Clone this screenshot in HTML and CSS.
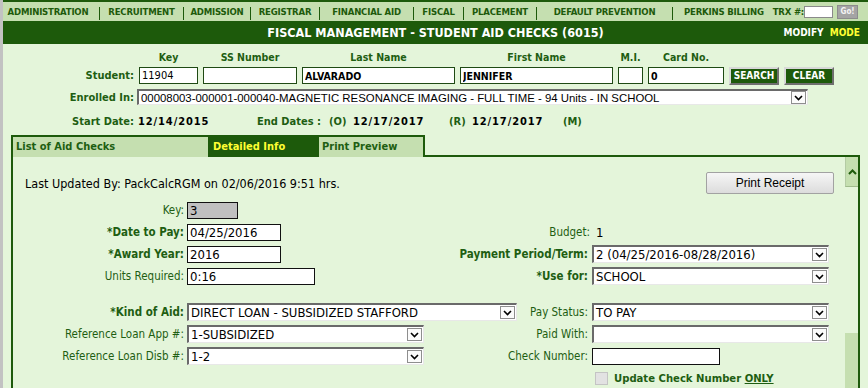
FILE: index.html
```html
<!DOCTYPE html>
<html lang="en">
<head>
    <meta charset="UTF-8">
    <meta name="viewport" content="width=device-width, initial-scale=1.0">
    <title>Fiscal Management - Student Aid Checks</title>
    <link rel="stylesheet" href="styles.css">
</head>
<body>
    <div class="menu">
        <a class="first">ADMINISTRATION</a><i></i>
        <a>RECRUITMENT</a><i></i>
        <a>ADMISSION</a><i></i>
        <a>REGISTRAR</a><i></i>
        <a>FINANCIAL AID</a><i></i>
        <a>FISCAL</a><i></i>
        <a>PLACEMENT</a><i></i>
        <a>DEFAULT PREVENTION</a><i></i>
        <div class="menu-end">
            <a>PERKINS BILLING</a>
            <span>TRX #:</span>
            <input type="text" class="trx">
            <button class="go">Go!</button>
        </div>
    </div>

    <div class="title">
        <span></span>
        <h1>FISCAL MANAGEMENT - STUDENT AID CHECKS (6015)</h1>
        <span class="mode">MODIFY <b>MODE</b></span>
    </div>

    <div class="search">
        <div class="srow heads">
            <span class="slab"></span>
            <span class="w-key">Key</span>
            <span class="w-ss">SS Number</span>
            <span class="w-last">Last Name</span>
            <span class="w-first">First Name</span>
            <span class="w-mi">M.I.</span>
            <span class="w-card">Card No.</span>
        </div>
        <div class="srow student">
            <label class="slab">Student:</label>
            <input type="text" class="sin w-key" value="11904">
            <input type="text" class="sin w-ss" value="">
            <input type="text" class="sin w-last strong" value="ALVARADO">
            <input type="text" class="sin w-first strong" value="JENNIFER">
            <input type="text" class="sin w-mi" value="">
            <input type="text" class="sin w-card strong" value="0">
            <button class="gbtn">SEARCH</button>
            <button class="gbtn">CLEAR</button>
        </div>
        <div class="srow enrolled">
            <label class="slab">Enrolled In:</label>
            <div class="sel enroll-sel">
                <span>00008003-000001-000040-MAGNETIC RESONANCE IMAGING - FULL TIME - 94 Units - IN SCHOOL</span>
                <b class="arr"><svg width="9" height="6" viewBox="0 0 9 6"><polyline points="1,1 4.5,4.5 8,1" fill="none" stroke="#000" stroke-width="1.6"/></svg></b>
            </div>
        </div>
        <div class="srow dates">
            <label class="slab">Start Date:</label>
            <span class="val d1">12/14/2015</span>
            <span class="d-end">End Dates :</span>
            <span class="d-o">(O)</span>
            <span class="val d2">12/17/2017</span>
            <span class="d-r">(R)</span>
            <span class="val d3">12/17/2017</span>
            <span>(M)</span>
        </div>
    </div>

    <div class="tabs">
        <div class="tab t1">List of Aid Checks</div>
        <div class="tab t2 active">Detailed Info</div>
        <div class="tab t3 last">Print Preview</div>
        <div class="tab-fill"></div>
    </div>

    <div class="panel">
        <div class="pbody">
            <div class="updated">
                <span>Last Updated By: PackCalcRGM on 02/06/2016 9:51 hrs.</span>
                <button class="receipt">Print Receipt</button>
            </div>

            <div class="row">
                <label class="lab">Key:</label>
                <input type="text" class="fin key-in" value="3" readonly>
            </div>
            <div class="row">
                <label class="lab req">*Date to Pay:</label>
                <input type="text" class="fin w94" value="04/25/2016">
                <div class="right">
                    <label class="lab2">Budget:</label>
                    <span class="budget">1</span>
                </div>
            </div>
            <div class="row">
                <label class="lab req">*Award Year:</label>
                <input type="text" class="fin w94" value="2016">
                <div class="right">
                    <label class="lab2 req">Payment Period/Term:</label>
                    <div class="sel w237">
                        <span>2 (04/25/2016-08/28/2016)</span>
                        <b class="arr"><svg width="9" height="6" viewBox="0 0 9 6"><polyline points="1,1 4.5,4.5 8,1" fill="none" stroke="#000" stroke-width="1.6"/></svg></b>
                    </div>
                </div>
            </div>
            <div class="row">
                <label class="lab">Units Required:</label>
                <input type="text" class="fin w128" value="0:16">
                <div class="right">
                    <label class="lab2 req">*Use for:</label>
                    <div class="sel w237">
                        <span>SCHOOL</span>
                        <b class="arr"><svg width="9" height="6" viewBox="0 0 9 6"><polyline points="1,1 4.5,4.5 8,1" fill="none" stroke="#000" stroke-width="1.6"/></svg></b>
                    </div>
                </div>
            </div>

            <div class="row group">
                <label class="lab req">*Kind of Aid:</label>
                <div class="sel w330">
                    <span>DIRECT LOAN - SUBSIDIZED STAFFORD</span>
                    <b class="arr"><svg width="9" height="6" viewBox="0 0 9 6"><polyline points="1,1 4.5,4.5 8,1" fill="none" stroke="#000" stroke-width="1.6"/></svg></b>
                </div>
                <div class="right">
                    <label class="lab2">Pay Status:</label>
                    <div class="sel w237">
                        <span>TO PAY</span>
                        <b class="arr"><svg width="9" height="6" viewBox="0 0 9 6"><polyline points="1,1 4.5,4.5 8,1" fill="none" stroke="#000" stroke-width="1.6"/></svg></b>
                    </div>
                </div>
            </div>
            <div class="row">
                <label class="lab">Reference Loan App #:</label>
                <div class="sel w237">
                    <span>1-SUBSIDIZED</span>
                    <b class="arr"><svg width="9" height="6" viewBox="0 0 9 6"><polyline points="1,1 4.5,4.5 8,1" fill="none" stroke="#000" stroke-width="1.6"/></svg></b>
                </div>
                <div class="right">
                    <label class="lab2">Paid With:</label>
                    <div class="sel w237">
                        <span></span>
                        <b class="arr"><svg width="9" height="6" viewBox="0 0 9 6"><polyline points="1,1 4.5,4.5 8,1" fill="none" stroke="#000" stroke-width="1.6"/></svg></b>
                    </div>
                </div>
            </div>
            <div class="row">
                <label class="lab">Reference Loan Disb #:</label>
                <div class="sel w237">
                    <span>1-2</span>
                    <b class="arr"><svg width="9" height="6" viewBox="0 0 9 6"><polyline points="1,1 4.5,4.5 8,1" fill="none" stroke="#000" stroke-width="1.6"/></svg></b>
                </div>
                <div class="right">
                    <label class="lab2">Check Number:</label>
                    <input type="text" class="fin w128 check-in" value="">
                </div>
            </div>
            <div class="row">
                <div class="right">
                    <label class="only"><span class="box"></span><span>Update Check Number <u>ONLY</u></span></label>
                </div>
            </div>
        </div>
        <div class="scroll">
            <div class="sc-up"><svg width="9" height="6" viewBox="0 0 9 6"><polyline points="1,5 4.5,1.5 8,5" fill="none" stroke="#1d5a0b" stroke-width="2"/></svg></div>
            <div class="sc-track"></div>
            <div class="sc-thumb"></div>
        </div>
    </div>
</body>
</html>
```

FILE: styles.css
```css
body {
    margin: 0;
    height: 388px;
    overflow: hidden;
    background-color: #e4f5da;
    border-left: 3px solid #c2c2c2;
    font-family: "DejaVu Sans Condensed", "DejaVu Sans", sans-serif;
    font-size: 11px;
    color: #1e5e12;
}
input, button {
    font-family: inherit;
    box-sizing: border-box;
    margin: 0;
}

/* top menu */
.menu {
    display: grid;
    grid-template-columns: 96px 1px 83px 1px 66px 1px 68px 1px 93px 1px 49px 1px 72px 1px 135px 1px 1fr;
    align-items: center;
    height: 19px;
    border-top: 2px solid #1d5a0b;
    background-color: #c5dfb0;
    font-size: 9.5px;
    letter-spacing: -0.2px;
    font-weight: bold;
    color: #1d5a0b;
}
.menu a {
    text-align: center;
    white-space: nowrap;
}
.menu a.first {
    padding-right: 6px;
}
.menu i {
    align-self: end;
    height: 13px;
    margin-bottom: 1px;
    background-color: #1d5a0b;
}
.menu-end {
    display: flex;
    align-items: center;
    padding-left: 11px;
    white-space: nowrap;
}
.menu-end span {
    margin-left: 9px;
}
.trx {
    width: 29px;
    height: 12px;
    padding: 0;
    border: 1px solid #8a8a8a;
    background: #fff;
}
.go {
    width: 21px;
    height: 14px;
    margin-left: 4px;
    padding: 0;
    border: 1px solid #8c8c8c;
    background: #a4a4a4;
    color: #f4f4f4;
    font-size: 8px;
    font-weight: bold;
    letter-spacing: 0;
}

/* title bar */
.title {
    display: grid;
    grid-template-columns: 1fr auto 1fr;
    align-items: center;
    height: 23px;
    background-color: #1d5a0b;
    color: #fff;
    font-weight: bold;
}
.title h1 {
    margin: 0;
    font-size: 12.5px;
}
.mode {
    justify-self: end;
    padding-right: 8px;
    font-size: 10px;
}
.mode b {
    margin-left: 3px;
    color: #ffff33;
}

/* student search */
.srow {
    display: flex;
    align-items: center;
    gap: 5px;
}
.srow > * {
    flex: none;
}
.slab {
    width: 131px;
    text-align: right;
    font-weight: bold;
}
.heads {
    height: 18px;
    margin-top: 4px;
    font-weight: bold;
    font-size: 10.5px;
}
.heads span {
    text-align: center;
}
.w-key { width: 59px; }
.w-ss { width: 94px; }
.w-last { width: 153px; }
.w-first { width: 153px; }
.w-mi { width: 25px; }
.w-card { width: 76px; }
.student {
    height: 17px;
    margin-top: 1px;
}
.sin {
    height: 17px;
    padding: 0 2px;
    border: 1px solid #1f4a14;
    background: #fff;
    font-size: 11px;
    color: #000;
}
.sin.strong {
    font-weight: bold;
    font-size: 10.5px;
}
.gbtn {
    width: 50px;
    height: 18px;
    padding: 0;
    border: 2px solid;
    border-color: #d8d8d8 #6f6f6f #6f6f6f #d8d8d8;
    background-color: #1d5a0b;
    color: #fff;
    font-size: 10px;
    font-weight: bold;
}
.enrolled {
    gap: 3px;
    margin-top: 5px;
}
.dates {
    height: 18px;
    margin-top: 7px;
    gap: 0;
    font-weight: bold;
}
.dates .slab {
    margin-right: 4px;
}
.val {
    color: #000;
    letter-spacing: 0.9px;
}
.d1 { width: 119px; }
.d-end { width: 72px; }
.d-o { width: 24px; }
.d2 { width: 96px; }
.d-r { width: 23px; }
.d3 { width: 91px; }

/* select look-alike */
.sel {
    display: flex;
    align-items: center;
    height: 18px;
    box-sizing: border-box;
    border-top: 2px solid #6a6a6a;
    border-left: 2px solid #6a6a6a;
    border-right: 1px solid #e8e8e8;
    border-bottom: 1px solid #e8e8e8;
    background: #fff;
    color: #000;
    font-size: 13px;
}
.sel span {
    flex: 1;
    padding-left: 2px;
    white-space: nowrap;
    overflow: hidden;
}
.sel.enroll-sel {
    width: 671px;
    height: 16px;
    font-family: "Liberation Sans", Arial, sans-serif;
    font-size: 11.4px;
}
.arr {
    display: flex;
    align-items: center;
    justify-content: center;
    width: 15px;
    height: 13px;
    margin-right: 1px;
    box-sizing: border-box;
    border: 1px solid #8e8e8e;
    background: #fbfbfb;
}
.w237 { width: 237px; }
.w330 { width: 330px; }

/* tabs */
.tabs {
    display: flex;
    height: 22px;
    margin-top: 5px;
    padding-left: 8px;
}
.tab {
    box-sizing: border-box;
    padding-left: 3px;
    border: 2px solid #1d5a0b;
    border-right: none;
    border-bottom: none;
    background-color: #c5dfb0;
    font-weight: bold;
    line-height: 20px;
}
.tab.active {
    background-color: #1d5a0b;
    color: #ffff33;
}
.tab.last {
    border-right: 2px solid #1d5a0b;
}
.t1 { width: 197px; }
.t2 { width: 109px; }
.t3 { width: 108px; }
.tab-fill {
    flex: 1;
    margin-right: 8px;
    border-bottom: 2px solid #1d5a0b;
}

/* detail panel */
.panel {
    display: flex;
    height: 250px;
    margin: 0 8px;
    border: 2px solid #1d5a0b;
    border-top: none;
}
.pbody {
    flex: 1;
    padding-top: 15px;
}
.updated {
    display: flex;
    align-items: center;
    justify-content: space-between;
    height: 22px;
    margin-bottom: 5px;
    padding: 0 11px 0 12px;
    font-size: 12.5px;
    color: #000;
}
.receipt {
    width: 128px;
    height: 22px;
    border: 1px solid #a2a2a2;
    border-radius: 2px;
    background: linear-gradient(#f6f6f6, #dcdcdc);
    font-family: "Liberation Sans", Arial, sans-serif;
    font-size: 12px;
    color: #000;
}
.row {
    display: flex;
    align-items: center;
    height: 22px;
    padding-right: 16px;
}
.row.group {
    margin-top: 14px;
}
.lab {
    flex: none;
    width: 171px;
    margin-right: 3px;
    text-align: right;
    font-size: 11.5px;
}
.lab2 {
    margin-right: 4px;
    font-size: 11.5px;
}
.req {
    font-weight: bold;
}
.right {
    display: flex;
    align-items: center;
    margin-left: auto;
}
.fin {
    height: 17px;
    padding: 0 2px;
    border: 1px solid #111;
    background: #fff;
    font-size: 13px;
    color: #000;
}
.key-in {
    width: 51px;
    background: #c0c0c0;
}
.w94 { width: 94px; }
.w128 { width: 128px; }
.check-in {
    margin-right: 109px;
}
.budget {
    width: 233px;
    margin-left: 2px;
    font-size: 13px;
    color: #000;
}
.only {
    display: flex;
    align-items: center;
    width: 237px;
    font-weight: bold;
    font-size: 11.2px;
}
.only .box {
    width: 11px;
    height: 11px;
    margin: 0 6px 0 3px;
    border: 1px solid #c4c4c4;
    background: #e2e2e2;
}

/* fake scrollbar */
.scroll {
    display: flex;
    flex-direction: column;
    width: 13px;
}
.sc-up {
    display: flex;
    align-items: center;
    justify-content: center;
    height: 29px;
    border-left: 1px solid #b4cba4;
    border-bottom: 1px solid #9fbb8c;
    background-color: #c5dfb0;
}
.sc-track {
    height: 146px;
}
.sc-thumb {
    flex: 1;
    background-color: #c5dfb0;
}
```
